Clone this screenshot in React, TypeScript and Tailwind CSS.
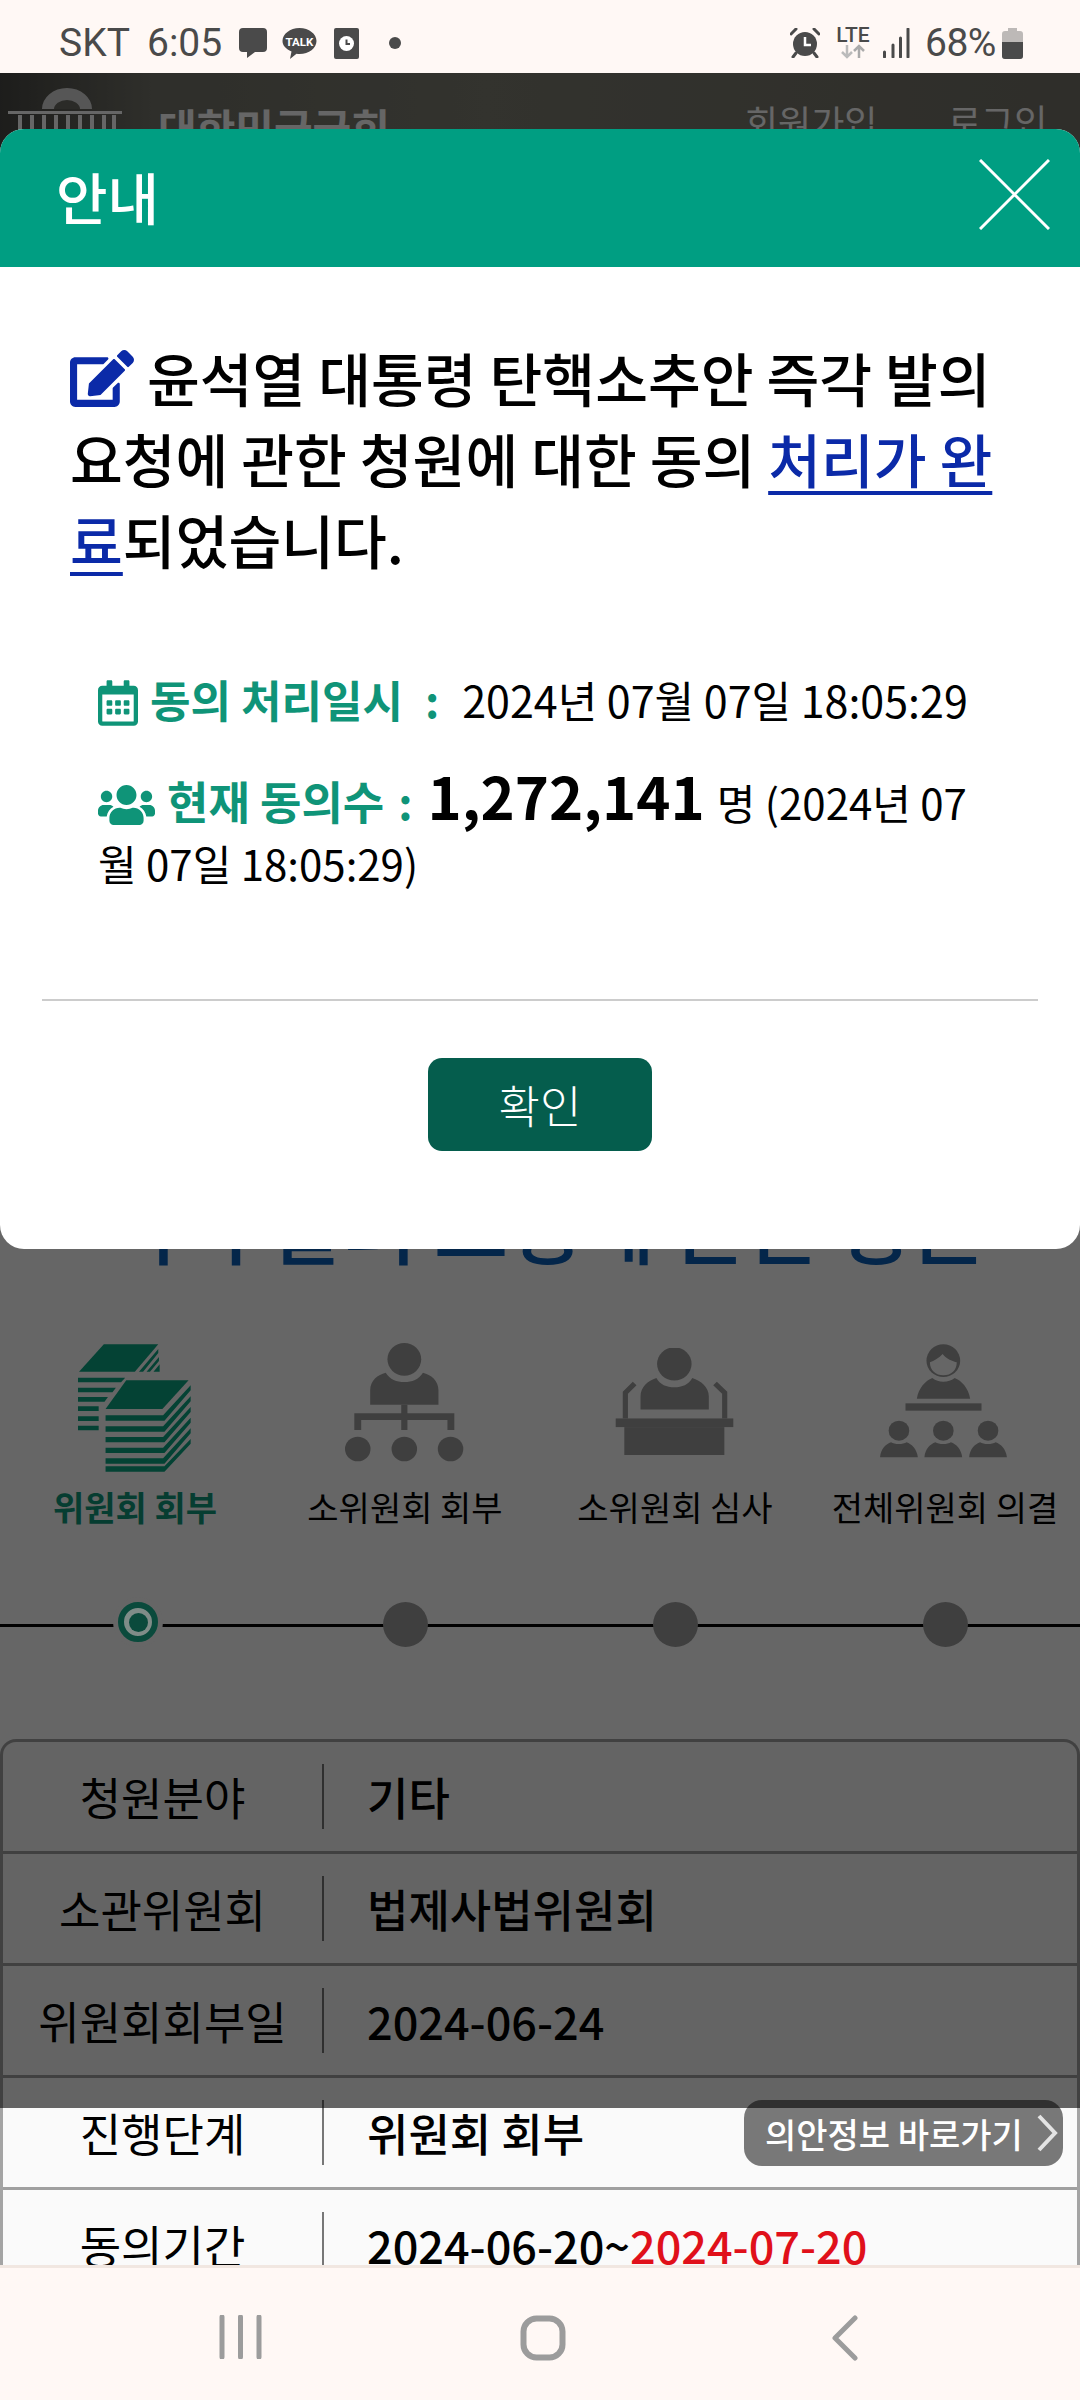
import { FaEdit, FaRegCalendarAlt, FaUsers } from "react-icons/fa";

const KR = "font-['Noto_Sans_CJK_KR','Noto_Sans',sans-serif]";

function StatusBar() {
  return (
    <div className="h-[73px] shrink-0 bg-[#fff8f5] flex items-center justify-between pt-[13px] pl-[59px] pr-[57px] text-[#4a4a4a] font-['Roboto',sans-serif] text-[39px] leading-none relative z-30">
      <div className="flex items-center">
        <span className="w-[88px]">SKT</span>
        <span className="w-[91px]">6:05</span>
        <svg width="30" height="32" viewBox="0 0 30 32" className="mr-[14px]">
          <path d="M5 1h20a4 4 0 0 1 4 4v16a4 4 0 0 1-4 4H17l-8 6 0-6H5a4 4 0 0 1-4-4V5a4 4 0 0 1 4-4z" fill="#4a4a4a" />
        </svg>
        <svg width="35" height="33" viewBox="0 0 35 33" className="mr-[17px]">
          <path d="M17.5 1C27 1 34.500 7 34.500 14S27 27 17.500 27c-1 0-2 0-3-.2L8 32l1.500-7.500C4 22 .5 18.500.5 14 .5 7 8 1 17.500 1z" fill="#4a4a4a" />
          <text x="17.500" y="18.500" textAnchor="middle" fontSize="11.500" fontWeight="700" fill="#fff" fontFamily="Roboto">TALK</text>
        </svg>
        <svg width="25" height="31" viewBox="0 0 25 31" className="mr-[30px]">
          <rect x="0" y="0" width="25" height="31" rx="2" fill="#4a4a4a" />
          <circle cx="12.500" cy="15.500" r="7.500" fill="#fff" />
          <path d="M12.500 11.500v4.500h3.500" stroke="#4a4a4a" strokeWidth="2" fill="none" />
        </svg>
        <span className="w-[12px] h-[12px] rounded-full bg-[#4a4a4a]" />
      </div>
      <div className="flex items-center">
        <svg width="30" height="30" viewBox="0 0 30 30" className="mr-[16px]">
          <path d="M1 6l5-5M29 6l-5-5M6 25l-3 4M24 25l3 4" stroke="#4a4a4a" strokeWidth="3" strokeLinecap="round" />
          <circle cx="15" cy="16" r="12" fill="#4a4a4a" />
          <path d="M15 9v8h6" stroke="#fff" strokeWidth="2.500" fill="none" />
        </svg>
        <div className="w-[34px] h-[32px] flex flex-col items-center mr-[12px]">
          <span className="text-[21px] leading-[17px] font-medium">LTE</span>
          <svg width="24" height="15" viewBox="0 0 24 15">
            <path d="M6 1v12M1 8l5 5 5-5" stroke="#bbb" strokeWidth="2.500" fill="none" />
            <path d="M18 14V2M13 7l5-5 5 5" stroke="#aaa" strokeWidth="2.500" fill="none" />
          </svg>
        </div>
        <svg width="28" height="30" viewBox="0 0 28 30" className="mr-[15px]">
          <path d="M2.500 24v5M11 17v12M18.500 10v19M26 1v28" stroke="#4a4a4a" strokeWidth="3" strokeLinecap="round" />
        </svg>
        <span className="w-[77px] tracking-[-0.5px]">68%</span>
        <svg width="21" height="31" viewBox="0 0 21 31">
          <path d="M6 0h9v3h3a3 3 0 0 1 3 3v22a3 3 0 0 1-3 3H3a3 3 0 0 1-3-3V6a3 3 0 0 1 3-3h3z" fill="#bdb9b7" />
          <path d="M0 14h21v14a3 3 0 0 1-3 3H3a3 3 0 0 1-3-3z" fill="#4a4a4a" />
        </svg>
      </div>
    </div>
  );
}

function PageHeader() {
  return (
    <header className="h-[120px] bg-[linear-gradient(90deg,#4a4a46_0%,#75756b_14%,#7f7f73_45%,#757369_100%)] flex items-start relative">
      <svg width="116" height="42" viewBox="0 0 116 42" className="mt-[15px] ml-[8px]">
        <path d="M34 21a25 21 0 0 1 50 0z" fill="#d8d8d8" />
        <path d="M46 21a13 9 0 0 1 26 0z" fill="#6b6b64" />
        <rect x="0" y="23" width="114" height="3" fill="#ffffff" />
        <path d="M12 27v15M24 27v15M36 27v15M48 27v15M60 27v15M72 27v15M84 27v15M96 27v15M106 27v15" stroke="#ffffff" strokeWidth="4" />
      </svg>
      <span className={`${KR} absolute left-[158px] top-[24px] text-[42px] leading-[60px] font-bold text-white`}>대한민국국회</span>
      <span className={`${KR} absolute left-[745px] top-[23px] text-[36px] leading-[50px] text-white`}>회원가입</span>
      <span className={`${KR} absolute left-[948px] top-[22px] text-[36px] leading-[50px] text-white`}>로그인</span>
    </header>
  );
}

function PaperStackIcon() {
  return (
    <svg width="113" height="132" viewBox="225 125 328 396" preserveAspectRatio="none" fill="#0aa582" className="-ml-[2px]">
      <path d="M300 132H458L390 214H228z" />
      <path d="M402 214l56-68v12l-44 56zM424 214l36-44v12l-26 32zM444 214l18-22v22z" />
      <path d="M225 232H362L350 246H225zM225 262H335L325 276H225zM225 290H312L302 304H225zM225 318H285V332H225zM225 348H285V362H225zM225 376H285V390H225z" />
      <path d="M365 240H546L470 326H305z" />
      <path d="M305 345H472L552 255V270L476 361H305zM305 378H472L552 288V303L476 394H305zM305 410H472L552 320V335L476 426H305zM305 442H472L552 352V367L476 458H305zM305 474H472L552 384V399L476 490H305zM305 498H476L552 416V430L476 514H305z" />
    </svg>
  );
}

function OrgIcon() {
  return (
    <svg width="119" height="120" viewBox="1000 120 345 360" preserveAspectRatio="none" fill="#9e9e9e" className="-ml-[2px]">
      <circle cx="1172" cy="172" r="49" />
      <path d="M1073 308V265C1073 235 1095 218 1118 212C1130 232 1150 240 1172 240C1194 240 1214 232 1226 212C1249 218 1271 235 1271 265V308Z" />
      <path d="M1163 308h18v26h136v50h-20v-30h-116v30h-18v-30h-116v30h-20v-50h136z" />
      <circle cx="1037" cy="441" r="37" />
      <circle cx="1172" cy="441" r="37" />
      <circle cx="1306" cy="441" r="37" />
    </svg>
  );
}

function PodiumIcon() {
  return (
    <svg width="119" height="108" viewBox="215 140 345 325" preserveAspectRatio="none" fill="#9e9e9e" className="mt-[6px] -ml-[2px]">
      <circle cx="387" cy="188" r="50" />
      <path d="M289 325V285C289 258 310 238 335 230C345 250 365 258 387 258C409 258 429 250 439 230C464 238 487 258 487 285V325Z" />
      <path d="M245 352V275L272 247M533 352V275L505 247" stroke="#9e9e9e" strokeWidth="15" fill="none" />
      <rect x="217" y="352" width="341" height="26" />
      <rect x="242" y="378" width="290" height="84" />
    </svg>
  );
}

function AssemblyIcon() {
  const seats = [0, 129, 259];
  return (
    <svg width="129" height="114" viewBox="980 130 375 342" preserveAspectRatio="none" fill="#9e9e9e" className="mt-[2px] -ml-[4px]">
      <circle cx="1167" cy="180" r="49" />
      <path d="M1128 185C1140 180 1155 172 1165 160C1175 175 1195 182 1206 185C1206 210 1190 224 1167 224C1145 224 1128 210 1128 185Z" fill="#fff" />
      <path d="M1090 294C1095 262 1115 240 1135 232C1145 240 1155 243 1167 243C1180 243 1190 240 1200 232C1220 240 1240 262 1245 294Z" />
      <rect x="1057" y="308" width="221" height="22" />
      {seats.map((dx) => (
        <g key={dx} transform={`translate(${dx} 0)`}>
          <circle cx="1038" cy="390" r="30" />
          <path d="M983 470C985 445 1000 430 1015 425C1025 432 1050 432 1060 425C1075 430 1090 445 1093 470Z" />
        </g>
      ))}
    </svg>
  );
}

const steps = [
  { label: "위원회 회부", icon: <PaperStackIcon />, active: true },
  { label: "소위원회 회부", icon: <OrgIcon />, active: false },
  { label: "소위원회 심사", icon: <PodiumIcon />, active: false },
  { label: "전체위원회 의결", icon: <AssemblyIcon />, active: false },
];

function Steps() {
  return (
    <section className="mt-[64px]">
      <div className="grid grid-cols-4">
        {steps.map((s) => (
          <div key={s.label} className="flex flex-col items-center">
            <div className="h-[134px] flex items-start justify-center">{s.icon}</div>
            <div className={`mt-[6px] text-[34px] leading-[50px] whitespace-nowrap ${s.active ? "font-bold text-[#0f9a7c]" : "text-black"}`}>
              {s.label}
            </div>
          </div>
        ))}
      </div>
      <div className="relative mt-[70px] h-[46px] grid grid-cols-4">
        <div className="absolute left-0 right-0 top-[22px] h-[3px] bg-black" />
        {steps.map((s) => (
          <div key={s.label} className="relative flex justify-center items-start">
            {s.active ? (
              <span className="relative z-10 ml-[6px] -mt-[5px] p-[5px] bg-[#666666] rounded-full">
                <span className="w-[40px] h-[40px] rounded-full border-[6px] border-[#0a4a3c] bg-[#7f8c88] flex items-center justify-center">
                  <span className="w-[19px] h-[19px] rounded-full bg-[#0a4a3c]" />
                </span>
              </span>
            ) : (
              <span className="w-[45px] h-[45px] rounded-full bg-[#9e9e9e]" />
            )}
          </div>
        ))}
      </div>
    </section>
  );
}

const rows = [
  { label: "청원분야", value: <>기타</> },
  { label: "소관위원회", value: <>법제사법위원회</> },
  { label: "위원회회부일", value: <>2024-06-24</> },
  { label: "진행단계", value: <>위원회 회부</> },
  { label: "동의기간", value: <>2024-06-20~<span className="text-[#e0101a]">2024-07-20</span></> },
];

function InfoTable() {
  return (
    <div className="mt-[91px] border-x-[3px] border-t-[3px] border-[#a4a4a4] rounded-t-[16px] bg-[#fafafa]">
      {rows.map((r) => (
        <div key={r.label} className="h-[112px] flex items-center border-b-[3px] border-[#a0a0a0] box-border text-[45px]">
          <div className="w-[321px] h-[65px] shrink-0 flex items-center justify-center border-r-[2px] border-[#777] text-black">
            {r.label}
          </div>
          <div className="pl-[43px] font-medium text-black">{r.value}</div>
        </div>
      ))}
    </div>
  );
}

function NoticeDialog() {
  return (
    <div className="absolute z-20 left-0 right-0 top-[56px] h-[1120px] bg-white rounded-[24px] overflow-hidden flex flex-col">
      <div className="h-[138px] shrink-0 bg-[#009e82] flex items-center justify-between pl-[56px] pr-[30px]">
        <span className="text-[56px] font-medium text-white -mt-[4px]">안내</span>
        <svg width="71" height="71" viewBox="0 0 71 71" className="-mt-[8px]">
          <path d="M1 1l69 69M70 1L1 70" stroke="#fff" strokeWidth="3" />
        </svg>
      </div>
      <p className="mt-[70px] mx-[70px] text-[57.400px] leading-[81px] font-medium text-black">
        <FaEdit className="inline-block w-[64px] h-[57px] text-[#0b2aa8] align-[-5px]" /> 윤석열 대통령 탄핵소추안 즉각 발의 요청에 관한 청원에 대한 동의{" "}
        <a className="text-[#0b2aa8] underline underline-offset-[8px] decoration-[4px]">처리가 완료</a>되었습니다.
      </p>
      <div className="mt-[89px] ml-[98px] mr-[80px] text-[43px] leading-[61px] text-black">
        <p>
          <FaRegCalendarAlt className="inline-block w-[40px] h-[46px] text-[#0f9478] align-[-8px]" />
          <span className="ml-[12px] text-[44px] font-bold text-[#0f9478]">동의 처리일시</span>
          <span className="ml-[22px] text-[44px] font-bold text-[#0f9478]">:</span>
          <span className="ml-[23px]">2024년 07월 07일 18:05:29</span>
        </p>
        <p className="mt-[40px]">
          <FaUsers className="inline-block w-[57px] h-[46px] text-[#0f9478] align-[-8px]" />
          <span className="ml-[12px] text-[45px] font-bold text-[#0f9478]">현재 동의수</span>
          <span className="ml-[14px] text-[44px] font-bold text-[#0f9478]">:</span>
          <span className="ml-[15px] text-[58px] leading-[40px] font-bold">1,272,141</span>
          <span className="ml-[12px] text-[42px]">명 (2024년 07 월 07일 18:05:29)</span>
        </p>
      </div>
      <div className="mt-[106px] mx-[42px] h-[2px] shrink-0 bg-[#cccccc]" />
      <button className="mt-[57px] self-center w-[224px] h-[93px] rounded-[14px] bg-[#055d4d] text-white text-[45px] font-light">확인</button>
    </div>
  );
}

function NavBar() {
  return (
    <nav className="h-[135px] shrink-0 bg-[#fff8f5] border-t-[3px] border-[#f1e7e1] flex pl-[90px] items-start pt-[47px] relative z-30">
      <div className="w-[302px] flex justify-center">
        <svg width="44" height="44" viewBox="0 0 44 44">
          <path d="M3 2v40M21.500 2v40M40 2v40" stroke="#9c9c9c" strokeWidth="5" strokeLinecap="round" />
        </svg>
      </div>
      <div className="w-[302px] flex justify-center">
        <svg width="46" height="46" viewBox="0 0 46 46">
          <rect x="3.500" y="3.500" width="39" height="39" rx="13" stroke="#9c9c9c" strokeWidth="6" fill="none" />
        </svg>
      </div>
      <div className="w-[302px] flex justify-center">
        <svg width="28" height="46" viewBox="0 0 28 46">
          <path d="M24 3L4 23l20 20" stroke="#9c9c9c" strokeWidth="5" strokeLinecap="round" strokeLinejoin="round" fill="none" />
        </svg>
      </div>
    </nav>
  );
}

export default function App() {
  return (
    <div className={`${KR} w-[1080px] h-[2400px] flex flex-col overflow-hidden bg-white`}>
      <StatusBar />
      <main className="relative flex-1 overflow-hidden bg-white">
        <PageHeader />
        <h1 className="mt-[865px] pl-[8px] text-center text-[81px] leading-[110px] font-medium text-[#0a5fb9] tracking-[-1px]">
          윤석열 대통령 탄핵소추안
          <br />
          즉각 발의 요청에 관한 청원
        </h1>
        <Steps />
        <InfoTable />
        <a className="absolute right-[17px] top-[2027px] h-[66px] w-[319px] rounded-[18px] bg-[#787878] text-white text-[34px] font-medium flex items-center pl-[21px] gap-[13px]">
          의안정보 바로가기
          <svg width="22" height="38" viewBox="0 0 22 38">
            <path d="M3 2l16 17L3 36" stroke="#e4e4e4" strokeWidth="4" fill="none" />
          </svg>
        </a>
        <div className="absolute left-0 right-0 top-0 h-[2035px] bg-black/60" />
        <NoticeDialog />
      </main>
      <NavBar />
    </div>
  );
}
